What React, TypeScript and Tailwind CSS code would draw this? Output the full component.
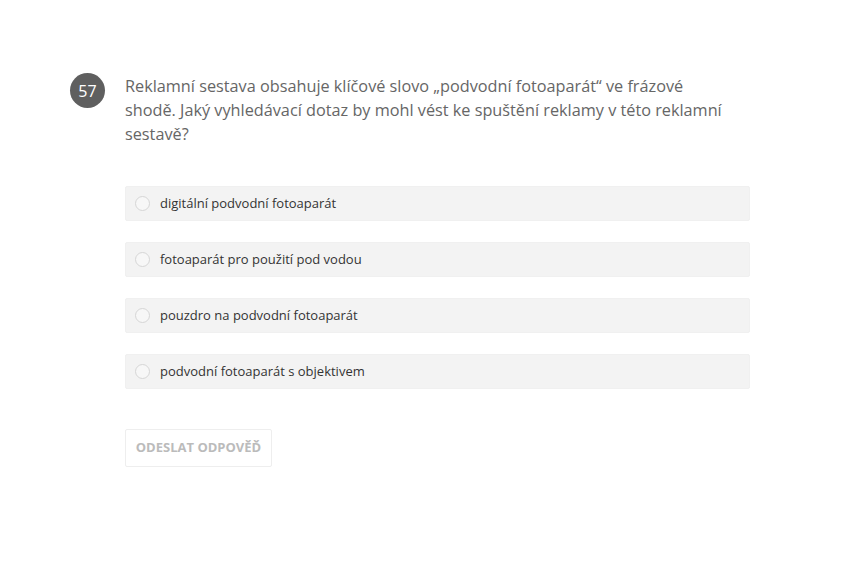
import React from "react";

const options = [
  "digitální podvodní fotoaparát",
  "fotoaparát pro použití pod vodou",
  "pouzdro na podvodní fotoaparát",
  "podvodní fotoaparát s objektivem",
];

export default function App() {
  return (
    <div className="w-[841px] h-[568px] bg-white" style={{ fontFamily: '"Open Sans", sans-serif' }}>
      <div className="flex pt-[73px] pl-[70px]">
        <div className="w-[35px] h-[35px] rounded-full bg-[#5f5f5f] text-white flex items-center justify-center text-[16px] shrink-0">
          57
        </div>
        <div className="ml-[20px] w-[625px]">
          <p className="text-[16.25px] leading-[24px] text-[#666] mt-[1px] w-[603px]">
            Reklamní sestava obsahuje klíčové slovo „podvodní fotoaparát“ ve frázové shodě. Jaký vyhledávací dotaz by mohl vést ke spuštění reklamy v této reklamní sestavě?
          </p>
          <div className="mt-[40px] flex flex-col gap-[21px]">
            {options.map((o) => (
              <div key={o} className="h-[35px] bg-[#f3f3f3] rounded-[2px] flex items-center pl-[9px] border border-[#f0f0f0]">
                <div className="w-[15px] h-[15px] rounded-full border border-[#d6d6d6] bg-[#f7f7f7]" />
                <span className="ml-[10px] text-[13px] text-[#333]">{o}</span>
              </div>
            ))}
          </div>
          <button className="mt-[40px] h-[38px] w-[147px] border border-[#eeeeee] rounded-[2px] text-[13px] font-bold text-[#bbbbbb] bg-white">
            ODESLAT ODPOVĚĎ
          </button>
        </div>
      </div>
    </div>
  );
}
